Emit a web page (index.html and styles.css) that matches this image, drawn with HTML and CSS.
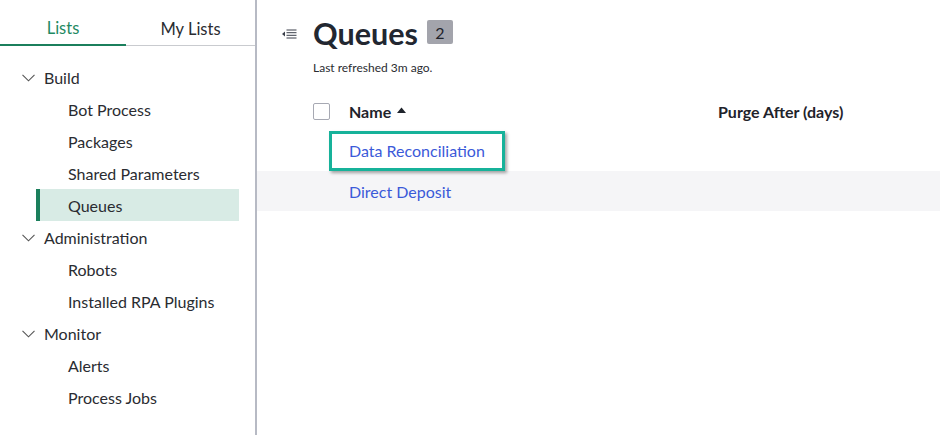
FILE: index.html
```html
<!DOCTYPE html>
<html>
<head>
<meta charset="utf-8">
<link rel="stylesheet" href="styles.css">
</head>
<body>
<div class="app">
  <aside class="sidebar">
    <div class="tabs">
      <div class="tab active">Lists</div>
      <div class="tab">My Lists</div>
    </div>
    <nav class="tree">
      <div class="group"><svg class="chev" width="13" height="8" viewBox="0 0 13 8"><path d="M0.5 0.8 L6.5 6.8 L12.5 0.8" fill="none" stroke="#555" stroke-width="1.1"/></svg>Build</div>
      <div class="item">Bot Process</div>
      <div class="item">Packages</div>
      <div class="item">Shared Parameters</div>
      <div class="item selected">Queues</div>
      <div class="group"><svg class="chev" width="13" height="8" viewBox="0 0 13 8"><path d="M0.5 0.8 L6.5 6.8 L12.5 0.8" fill="none" stroke="#555" stroke-width="1.1"/></svg>Administration</div>
      <div class="item">Robots</div>
      <div class="item">Installed RPA Plugins</div>
      <div class="group"><svg class="chev" width="13" height="8" viewBox="0 0 13 8"><path d="M0.5 0.8 L6.5 6.8 L12.5 0.8" fill="none" stroke="#555" stroke-width="1.1"/></svg>Monitor</div>
      <div class="item">Alerts</div>
      <div class="item">Process Jobs</div>
    </nav>
  </aside>
  <main class="main">
    <div class="header">
      <svg class="collapse" width="15" height="10" viewBox="0 0 15 10"><path d="M0 5 L3 2.6 L3 7.4 Z" fill="#3a3f4a"/><path d="M4.5 1 H14.5 M4.5 3.7 H14.5 M4.5 6.3 H14.5 M4.5 9 H14.5" stroke="#3a3f4a" stroke-width="1"/></svg>
      <h1 class="title">Queues</h1>
      <span class="badge">2</span>
    </div>
    <div class="refreshed">Last refreshed 3m ago.</div>
    <div class="table">
      <div class="row head">
        <div class="c-check"><span class="checkbox"></span></div>
        <div class="c-name">Name <svg class="sort" width="9" height="6" viewBox="0 0 9 6"><path d="M0 6 L4.5 0.5 L9 6 Z" fill="#1f232b"/></svg></div>
        <div class="c-purge">Purge After (days)</div>
      </div>
      <div class="row">
        <div class="c-check"></div>
        <div class="c-name"><a class="link focused">Data Reconciliation</a></div>
        <div class="c-purge"></div>
      </div>
      <div class="row alt">
        <div class="c-check"></div>
        <div class="c-name"><a class="link">Direct Deposit</a></div>
        <div class="c-purge"></div>
      </div>
    </div>
  </main>
</div>
</body>
</html>
```

FILE: styles.css
```css
* { box-sizing: border-box; }
html, body { margin: 0; padding: 0; background: #fff; }
body {
  font-family: Lato, "Open Sans", "Liberation Sans", sans-serif;
  color: #2a2c31;
  width: 940px;
  height: 435px;
  overflow: hidden;
}
.app { display: flex; height: 435px; }

.sidebar {
  width: 257px;
  flex: none;
  border-right: 2px solid #b7bac4;
}
.tabs {
  display: flex;
  height: 46px;
  border-bottom: 1px solid #c9cbcf;
}
.tab {
  font-size: 16.5px;
  display: flex;
  align-items: center;
  justify-content: center;
  padding-top: 12px;
  color: #2a2c31;
}
.tab:first-child { width: 126px; }
.tab:last-child { width: 129px; }
.tab.active {
  color: #1f8a63;
  border-bottom: 2px solid #1b7f5c;
  margin-bottom: -1px;
}
.tree { padding-top: 15px; }
.group, .item {
  height: 32px;
  display: flex;
  align-items: center;
  font-size: 16px;
  color: #2a2c31;
}
.group { padding-left: 22px; }
.chev { margin-right: 9px; margin-top: 1px; }
.item { margin-left: 36px; margin-right: 16px; padding-left: 32px; }
.item.selected {
  background: #d8ebe5;
  border-left: 4px solid #1b7f5c;
  padding-left: 28px;
}

.main { flex: 1; padding-top: 15px; }
.header {
  display: flex;
  align-items: center;
  padding-left: 25px;
  height: 36px;
}
.collapse { margin-right: 16px; margin-top: 1px; }
.title {
  margin: 0;
  font-size: 30.5px;
  font-weight: 700;
  color: #222731;
  line-height: 36px;
}
.badge {
  margin-left: 9px;
  width: 26px;
  height: 24px;
  background: #a3a4ac;
  color: #1f232b;
  font-size: 16px;
  display: flex;
  align-items: center;
  justify-content: center;
  border-radius: 2px;
  margin-top: -2px;
}
.refreshed {
  margin-top: 9px;
  padding-left: 56px;
  font-size: 12px;
  color: #2a2c31;
}
.table { margin-top: 16px; }
.row {
  display: flex;
  align-items: center;
  height: 40px;
}
.row.alt { background: #f5f5f7; }
.c-check { width: 92px; padding-left: 56px; flex: none; display: flex; }
.c-name { width: 369px; flex: none; font-size: 16px; display: flex; align-items: center; }
.c-purge { flex: 1; font-size: 16px; }
.head .c-name, .head .c-purge { font-weight: 700; color: #1f232b; }
.checkbox {
  width: 17px;
  height: 17px;
  border: 1.5px solid #a7a9b3;
  border-radius: 2px;
  display: block;
}
.sort { margin-left: 6px; margin-top: -2px; }
.link { color: #3b5ad9; text-decoration: none; display: inline-block; }
.link.focused {
  margin-left: -20px;
  padding: 0 17px;
  height: 40px;
  line-height: 34px;
  border: 3px solid #17b29a;
  box-shadow: 2px 2px 3px rgba(0,0,0,0.35);
}
```
